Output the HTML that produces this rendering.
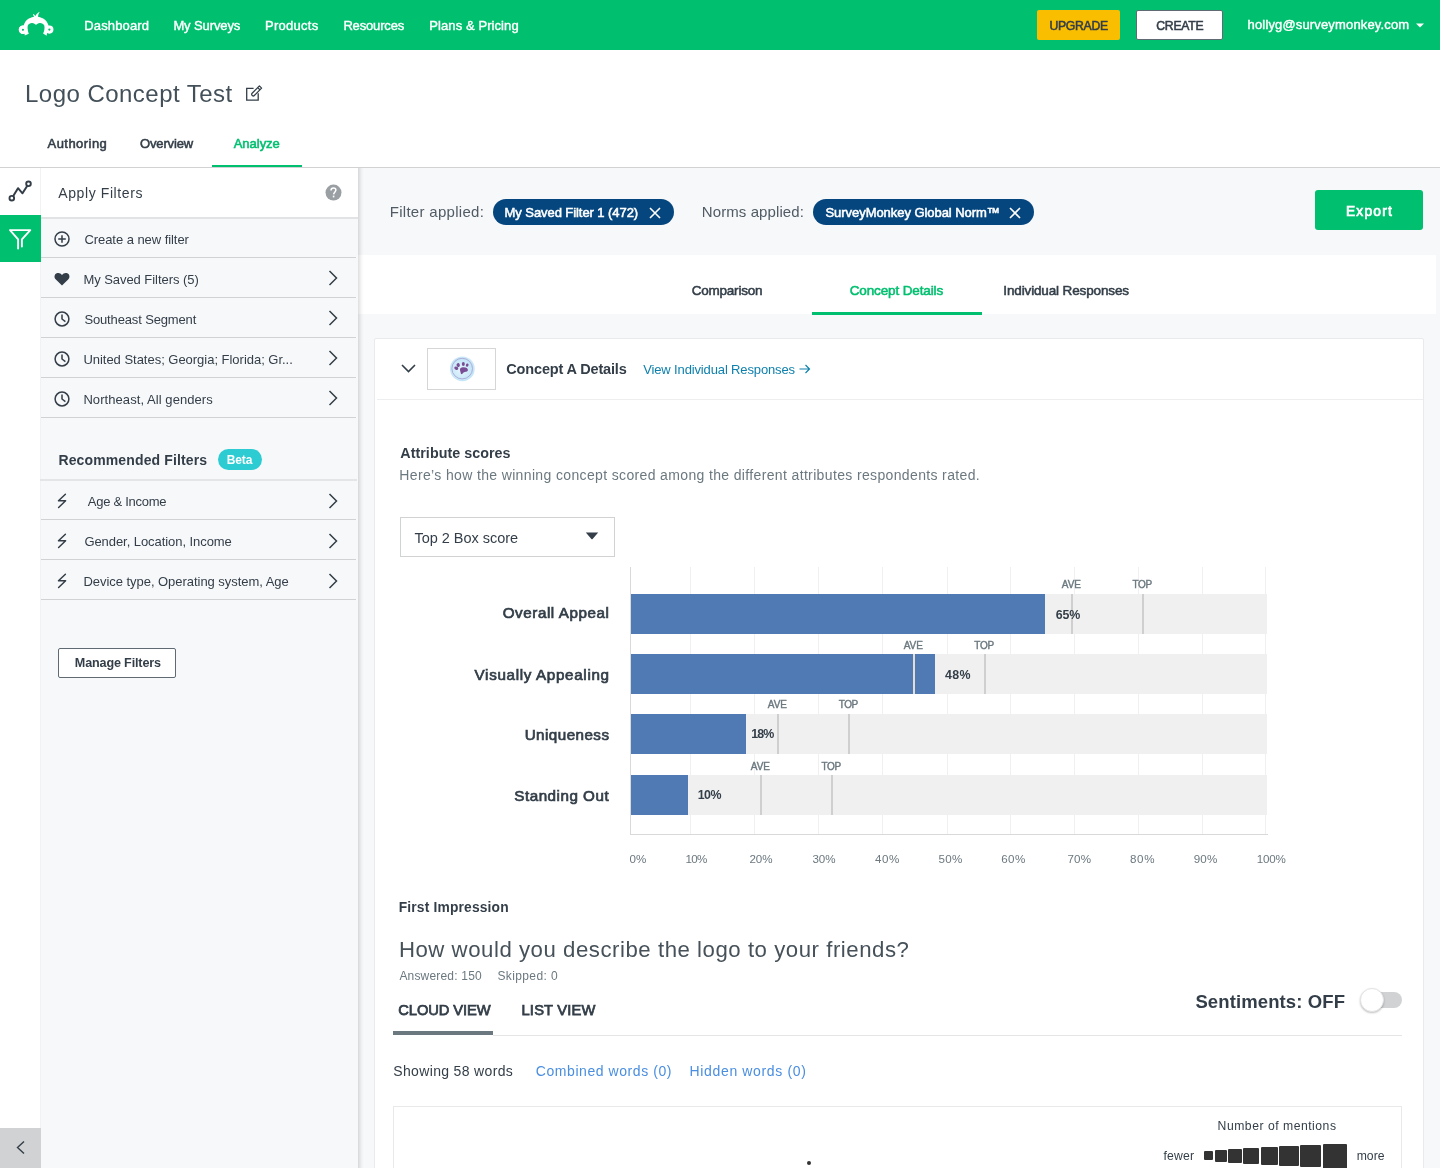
<!DOCTYPE html>
<html><head><meta charset="utf-8">
<style>
*{box-sizing:border-box;margin:0;padding:0}
html,body{width:1440px;height:1168px;overflow:hidden;background:#fff;font-family:"Liberation Sans",sans-serif;color:#333e48;position:relative}
.t{position:absolute;white-space:nowrap}
.b{position:absolute}
svg{position:absolute;overflow:visible}
</style></head><body>
<!-- header -->
<div class="b" style="left:0;top:0;width:1440px;height:50px;background:#00bf6f"></div>
<svg style="left:15px;top:8px" width="42" height="32" viewBox="0 0 42 32">
 <g fill="#fff" fill-rule="evenodd">
  <path d="M8 17.4 a4.25 4.25 0 1 0 0.01 0 Z M7.9 20.6 a1.15 1.15 0 1 1 -0.01 0 Z" transform="translate(0,0)"/>
  <path d="M9.8 27.6 L13.8 25.7 C12.6 23 12.3 19.6 12.8 17.6 C13.5 15.6 15.4 14.8 17.2 14.9 C18.8 15 20.2 15.8 21 16.9 C21.8 15.8 23.2 15 24.8 14.9 C26.6 14.8 28.6 15.7 29.3 17.6 C29.8 19.6 29.5 23 28.1 25.5 L31.6 27.7 L33.6 17.6 C31.8 11.2 26.5 8.7 21 8.7 C15.5 8.7 10.3 11.2 8.6 17.6 Z"/>
  <path d="M19.2 9 L17.9 6.6 L18.6 6.1 L20.5 7.9 C21.4 6.1 22.9 4.6 24.7 4 C23.6 5.5 23.1 7.1 23 9 Z"/>
 </g>
 <circle cx="8" cy="21.7" r="2.7" fill="none" stroke="#fff" stroke-width="2.9"/>
 <circle cx="34.4" cy="21.6" r="2.6" fill="none" stroke="#fff" stroke-width="2.9"/>
</svg>
<div class="b" style="left:1037px;top:10px;width:83px;height:30px;background:#f9be00;border-radius:2px"></div>
<div class="b" style="left:1136px;top:10px;width:87px;height:30px;background:#fff;border:1px solid #5f6a73;border-radius:2px"></div>
<svg style="left:1416px;top:23px" width="8" height="5" viewBox="0 0 8 5"><path d="M0 0.5 H8 L4 4.5 Z" fill="#fff"/></svg>

<!-- title edit icon -->
<svg style="left:240px;top:80px" width="28" height="26" viewBox="240 80 28 26">
 <path d="M253.6 88.3 H246.7 V100.2 H258.2 V93.3" fill="none" stroke="#333e48" stroke-width="1.3"/>
 <path d="M254.3 95.5 L261.6 88.1 L259.4 85.9 L252.1 93.2 C251.5 94.1 251.7 95.1 252.3 95.6 C252.9 96.1 253.7 96.1 254.3 95.5 Z M257.7 87.6 L259.9 89.8" fill="none" stroke="#333e48" stroke-width="1.25" stroke-linejoin="round"/>
</svg>
<div class="b" style="left:212px;top:165px;width:90px;height:3px;background:#00bf6f"></div>
<div class="b" style="left:0;top:167px;width:1440px;height:1px;background:#d0d2d3"></div>

<!-- left rail -->
<div class="b" style="left:0;top:168px;width:41px;height:1000px;background:#fff"></div>
<div class="b" style="left:40px;top:168px;width:1px;height:1000px;background:#f1f2f3"></div>
<svg style="left:0;top:168px" width="40" height="48" viewBox="0 168 40 48">
 <circle cx="11.8" cy="198.2" r="2.3" fill="none" stroke="#333e48" stroke-width="1.9"/>
 <circle cx="28.5" cy="183.8" r="2.3" fill="none" stroke="#333e48" stroke-width="1.9"/>
 <path d="M13.1 196.2 L18 188.2 L22.5 193.3 L27.3 185.7" fill="none" stroke="#333e48" stroke-width="2" stroke-linejoin="round"/>
</svg>
<div class="b" style="left:0;top:215px;width:41px;height:47px;background:#00bf6f"></div>
<svg style="left:0;top:216px" width="40" height="46" viewBox="0 216 40 46">
 <path d="M10 230.1 H30.3 L21.9 239.3 V246.6 M10 230.1 L18.1 239.3 V248.6" fill="none" stroke="#fff" stroke-width="1.9" stroke-linejoin="round" stroke-linecap="round"/>
</svg>
<div class="b" style="left:0;top:1128px;width:41px;height:40px;background:#d0d2d3"></div>
<svg style="left:0;top:1128px" width="40" height="40" viewBox="0 1128 40 40"><path d="M24 1141.5 L17.5 1147.5 L24 1153.5" fill="none" stroke="#333e48" stroke-width="1.4"/></svg>

<!-- filter panel -->
<div class="b" style="left:41px;top:168px;width:317px;height:1000px;background:#f7f8fa"></div>
<div class="b" style="left:41px;top:168px;width:317px;height:51px;background:#fff;border-bottom:2px solid #e1e3e5"></div>
<svg style="left:325px;top:184px" width="17" height="17" viewBox="0 0 17 17">
 <circle cx="8.5" cy="8.6" r="8" fill="#9a9fa4"/>
 <path d="M6 6.4 C6 4.8 7.1 3.9 8.5 3.9 C9.9 3.9 10.9 4.8 10.9 6.1 C10.9 7.7 8.9 8.1 8.6 10.3" fill="none" stroke="#fff" stroke-width="1.5"/>
 <rect x="7.8" y="11.6" width="1.6" height="1.8" fill="#fff"/>
</svg>
<div class="b" style="left:41px;top:257px;width:315px;height:1px;background:#d0d2d3"></div>
<div class="b" style="left:41px;top:297px;width:315px;height:1px;background:#d0d2d3"></div>
<div class="b" style="left:41px;top:337px;width:315px;height:1px;background:#d0d2d3"></div>
<div class="b" style="left:41px;top:377px;width:315px;height:1px;background:#d0d2d3"></div>
<div class="b" style="left:41px;top:417px;width:315px;height:1px;background:#d0d2d3"></div>
<div class="b" style="left:41px;top:519px;width:315px;height:1px;background:#d0d2d3"></div>
<div class="b" style="left:41px;top:559px;width:315px;height:1px;background:#d0d2d3"></div>
<div class="b" style="left:41px;top:599px;width:315px;height:1px;background:#d0d2d3"></div>
<svg style="left:326px;top:269px" width="14" height="18" viewBox="0 0 14 18"><path d="M3.5 2 L10.5 9 L3.5 16" fill="none" stroke="#333e48" stroke-width="1.5"/></svg>
<svg style="left:326px;top:309px" width="14" height="18" viewBox="0 0 14 18"><path d="M3.5 2 L10.5 9 L3.5 16" fill="none" stroke="#333e48" stroke-width="1.5"/></svg>
<svg style="left:326px;top:349px" width="14" height="18" viewBox="0 0 14 18"><path d="M3.5 2 L10.5 9 L3.5 16" fill="none" stroke="#333e48" stroke-width="1.5"/></svg>
<svg style="left:326px;top:389px" width="14" height="18" viewBox="0 0 14 18"><path d="M3.5 2 L10.5 9 L3.5 16" fill="none" stroke="#333e48" stroke-width="1.5"/></svg>
<svg style="left:326px;top:492px" width="14" height="18" viewBox="0 0 14 18"><path d="M3.5 2 L10.5 9 L3.5 16" fill="none" stroke="#333e48" stroke-width="1.5"/></svg>
<svg style="left:326px;top:532px" width="14" height="18" viewBox="0 0 14 18"><path d="M3.5 2 L10.5 9 L3.5 16" fill="none" stroke="#333e48" stroke-width="1.5"/></svg>
<svg style="left:326px;top:572px" width="14" height="18" viewBox="0 0 14 18"><path d="M3.5 2 L10.5 9 L3.5 16" fill="none" stroke="#333e48" stroke-width="1.5"/></svg>
<svg style="left:53px;top:230px" width="18" height="18" viewBox="0 0 18 18"><circle cx="9" cy="9" r="7" fill="none" stroke="#333e48" stroke-width="1.5"/><path d="M9 5.2 V12.8 M5.2 9 H12.8" stroke="#333e48" stroke-width="1.5"/></svg>
<svg style="left:53px;top:271px" width="18" height="16" viewBox="0 0 18 16"><path d="M9 14.5 L2.6 8.3 C0.9 6.6 1.2 3.3 3.7 2.3 C5.8 1.5 7.8 2.4 9 4 C10.2 2.4 12.2 1.5 14.3 2.3 C16.8 3.3 17.1 6.6 15.4 8.3 Z" fill="#333e48"/></svg>
<svg style="left:53px;top:310px" width="18" height="18" viewBox="0 0 18 18"><circle cx="9" cy="9" r="6.9" fill="none" stroke="#333e48" stroke-width="1.5"/><path d="M9 4.6 V9 L12.4 11.6" fill="none" stroke="#333e48" stroke-width="1.5"/></svg>
<svg style="left:53px;top:350px" width="18" height="18" viewBox="0 0 18 18"><circle cx="9" cy="9" r="6.9" fill="none" stroke="#333e48" stroke-width="1.5"/><path d="M9 4.6 V9 L12.4 11.6" fill="none" stroke="#333e48" stroke-width="1.5"/></svg>
<svg style="left:53px;top:390px" width="18" height="18" viewBox="0 0 18 18"><circle cx="9" cy="9" r="6.9" fill="none" stroke="#333e48" stroke-width="1.5"/><path d="M9 4.6 V9 L12.4 11.6" fill="none" stroke="#333e48" stroke-width="1.5"/></svg>
<svg style="left:55px;top:492px" width="14" height="18" viewBox="0 0 14 18"><path d="M10.4 2.3 L3.5 8.8 H10.6 L3.6 15.5" fill="none" stroke="#333e48" stroke-width="1.5" stroke-linejoin="round" stroke-linecap="round"/></svg>
<svg style="left:55px;top:532px" width="14" height="18" viewBox="0 0 14 18"><path d="M10.4 2.3 L3.5 8.8 H10.6 L3.6 15.5" fill="none" stroke="#333e48" stroke-width="1.5" stroke-linejoin="round" stroke-linecap="round"/></svg>
<svg style="left:55px;top:572px" width="14" height="18" viewBox="0 0 14 18"><path d="M10.4 2.3 L3.5 8.8 H10.6 L3.6 15.5" fill="none" stroke="#333e48" stroke-width="1.5" stroke-linejoin="round" stroke-linecap="round"/></svg>
<div class="b" style="left:40px;top:479px;width:317px;height:2px;background:#e3e5e7"></div>
<div class="b" style="left:218px;top:449px;width:44px;height:21px;background:#2dccd3;border-radius:11px"></div>
<div class="b" style="left:58px;top:648px;width:118px;height:30px;background:#fff;border:1px solid #5f6a73;border-radius:2px"></div>

<!-- main -->
<div class="b" style="left:358px;top:168px;width:1082px;height:1000px;background:#f7f8fa"></div>
<div class="b" style="left:493px;top:199px;width:181px;height:26px;background:#05467e;border-radius:13px"></div>
<svg style="left:649px;top:207px" width="12" height="12" viewBox="0 0 12 12"><path d="M1 1 L11 11 M11 1 L1 11" stroke="#fff" stroke-width="1.6"/></svg>
<div class="b" style="left:813px;top:199px;width:221px;height:26px;background:#05467e;border-radius:13px"></div>
<svg style="left:1009px;top:207px" width="12" height="12" viewBox="0 0 12 12"><path d="M1 1 L11 11 M11 1 L1 11" stroke="#fff" stroke-width="1.6"/></svg>
<div class="b" style="left:1315px;top:190px;width:108px;height:40px;background:#00bf6f;border-radius:3px"></div>

<div class="b" style="left:358px;top:255px;width:1078px;height:59px;background:#fff"></div>
<div class="b" style="left:812px;top:312px;width:170px;height:3px;background:#00bf6f"></div>

<!-- card -->
<div class="b" style="left:374px;top:338px;width:1050px;height:900px;background:#fff;border:1px solid #e8eaeb;border-radius:2px"></div>
<div class="b" style="left:377px;top:399px;width:1046px;height:1px;background:#eceeef"></div>
<svg style="left:401px;top:364px" width="15" height="9" viewBox="0 0 15 9"><path d="M1 1 L7.5 7.5 L14 1" fill="none" stroke="#333e48" stroke-width="1.6"/></svg>
<div class="b" style="left:427px;top:348px;width:69px;height:42px;background:#fff;border:1px solid #d6d6d6"></div>
<svg style="left:448px;top:355px" width="28" height="28" viewBox="0 0 28 28">
 <defs><radialGradient id="pg" cx="0.45" cy="0.55" r="0.55"><stop offset="0" stop-color="#e6f6fd"/><stop offset="0.8" stop-color="#c4e6f8"/><stop offset="1" stop-color="#aed9f4" stop-opacity="0.6"/></radialGradient></defs>
 <circle cx="14.4" cy="13.8" r="12.4" fill="url(#pg)"/>
 <circle cx="14.2" cy="13.6" r="10.3" fill="none" stroke="#9b86bf" stroke-width="0.6"/>
 <g fill="#7a4e94">
  <ellipse cx="8.3" cy="13.2" rx="2.1" ry="1.6" transform="rotate(25 8.3 13.2)"/>
  <ellipse cx="10.2" cy="10.1" rx="1.6" ry="2" transform="rotate(-20 10.2 10.1)"/>
  <ellipse cx="15.3" cy="8.9" rx="1.5" ry="2" />
  <ellipse cx="19.2" cy="10.1" rx="1.3" ry="1.7" transform="rotate(20 19.2 10.1)"/>
  <path d="M12.2 13.5 C13.5 11.9 17 11.8 18.8 13 C20.3 14 20.3 16 19 16.4 C17.6 16.8 15.8 16.6 14.6 18.5 C13.6 20 12.8 18.8 12.6 17.5 C12.4 16.3 11.6 14.4 12.2 13.5 Z"/>
 </g>
</svg>
<svg style="left:799px;top:364px" width="12" height="10" viewBox="0 0 12 10"><path d="M0.5 5 H10.5 M6.5 1 L10.5 5 L6.5 9" fill="none" stroke="#0e80ad" stroke-width="1.2"/></svg>

<!-- dropdown -->
<div class="b" style="left:400px;top:517px;width:215px;height:40px;background:#fff;border:1px solid #d0d2d3"></div>
<svg style="left:585px;top:532px" width="14" height="8" viewBox="0 0 14 8"><path d="M0.8 0.5 H13.2 L7.6 7 C7.3 7.4 6.7 7.4 6.4 7 Z" fill="#333e48"/></svg>

<div class="b" style="left:690.3px;top:567px;width:1px;height:267px;background:#f0f0f0"></div>
<div class="b" style="left:754.3px;top:567px;width:1px;height:267px;background:#f0f0f0"></div>
<div class="b" style="left:818.3px;top:567px;width:1px;height:267px;background:#f0f0f0"></div>
<div class="b" style="left:882.3px;top:567px;width:1px;height:267px;background:#f0f0f0"></div>
<div class="b" style="left:946.5px;top:567px;width:1px;height:267px;background:#f0f0f0"></div>
<div class="b" style="left:1009.5px;top:567px;width:1px;height:267px;background:#f0f0f0"></div>
<div class="b" style="left:1073.75px;top:567px;width:1px;height:267px;background:#f0f0f0"></div>
<div class="b" style="left:1137.5px;top:567px;width:1px;height:267px;background:#f0f0f0"></div>
<div class="b" style="left:1201.5px;top:567px;width:1px;height:267px;background:#f0f0f0"></div>
<div class="b" style="left:1265px;top:567px;width:1px;height:267px;background:#f0f0f0"></div>
<div class="b" style="left:630px;top:567px;width:1px;height:268px;background:#d9d9d9"></div>
<div class="b" style="left:630px;top:834px;width:638px;height:1px;background:#d9d9d9"></div>
<div class="b" style="left:631px;top:594px;width:636px;height:40px;background:#f0f0f0"></div>
<div class="b" style="left:631px;top:594px;width:414px;height:40px;background:#4f7ab3"></div>
<div class="b" style="left:1071px;top:594px;width:2px;height:40px;background:#cfcfcf"></div>
<div class="b" style="left:1142px;top:594px;width:2px;height:40px;background:#cfcfcf"></div>
<div class="b" style="left:631px;top:654px;width:636px;height:40px;background:#f0f0f0"></div>
<div class="b" style="left:631px;top:654px;width:304px;height:40px;background:#4f7ab3"></div>
<div class="b" style="left:913px;top:654px;width:2px;height:40px;background:#e3ddd3"></div>
<div class="b" style="left:984px;top:654px;width:2px;height:40px;background:#cfcfcf"></div>
<div class="b" style="left:631px;top:714px;width:636px;height:40px;background:#f0f0f0"></div>
<div class="b" style="left:631px;top:714px;width:115px;height:40px;background:#4f7ab3"></div>
<div class="b" style="left:777px;top:714px;width:2px;height:40px;background:#cfcfcf"></div>
<div class="b" style="left:848px;top:714px;width:2px;height:40px;background:#cfcfcf"></div>
<div class="b" style="left:631px;top:775px;width:636px;height:40px;background:#f0f0f0"></div>
<div class="b" style="left:631px;top:775px;width:57px;height:40px;background:#4f7ab3"></div>
<div class="b" style="left:760px;top:775px;width:2px;height:40px;background:#cfcfcf"></div>
<div class="b" style="left:831px;top:775px;width:2px;height:40px;background:#cfcfcf"></div>

<!-- cloud section -->
<div class="b" style="left:393px;top:1031px;width:100px;height:4px;background:#6b787f"></div>
<div class="b" style="left:493px;top:1035px;width:909px;height:1px;background:#e3e5e7"></div>
<div class="b" style="left:1361px;top:992px;width:41px;height:16px;background:#d0d2d3;border-radius:8px"></div>
<div class="b" style="left:1360px;top:988px;width:24px;height:24px;background:#fff;border-radius:12px;box-shadow:0 1px 2px rgba(0,0,0,0.25);border:1px solid #e4e4e4"></div>
<div class="b" style="left:393px;top:1106px;width:1009px;height:100px;background:#fff;border:1px solid #e8e9ea"></div>
<div class="b" style="left:806.5px;top:1160.5px;width:4px;height:4px;background:#333;border-radius:2px"></div>
<div class="b" style="left:1204.2px;top:1151.4px;width:9.3px;height:9.1px;background:#333;border-radius:1px"></div>
<div class="b" style="left:1215.3px;top:1150.2px;width:11.4px;height:11.5px;background:#333;border-radius:1px"></div>
<div class="b" style="left:1228.2px;top:1149.1px;width:13.5px;height:13.7px;background:#333;border-radius:1px"></div>
<div class="b" style="left:1243.3px;top:1148.2px;width:15.4px;height:15.5px;background:#333;border-radius:1px"></div>
<div class="b" style="left:1260.5px;top:1147.3px;width:17.1px;height:17.3px;background:#333;border-radius:1px"></div>
<div class="b" style="left:1279.4px;top:1146.2px;width:19.5px;height:19.7px;background:#333;border-radius:1px"></div>
<div class="b" style="left:1300.4px;top:1145.3px;width:21.1px;height:21.5px;background:#333;border-radius:1px"></div>
<div class="b" style="left:1323.3px;top:1144.0px;width:23.5px;height:24.5px;background:#333;border-radius:1px"></div>
<div class="b" style="left:358px;top:168px;width:6px;height:1000px;background:linear-gradient(to right,rgba(0,0,0,0.13),rgba(0,0,0,0.07) 35%,rgba(0,0,0,0.025) 65%,rgba(0,0,0,0))"></div>

<div style="position:absolute;left:0;top:0;width:1440px;height:1168px;will-change:transform"><div class="t" style="left:84.30px;top:19.10px;font-size:13px;line-height:13px;font-weight:normal;color:#fff;letter-spacing:0.142px;-webkit-text-stroke:0.4px #fff;">Dashboard</div>
<div class="t" style="left:173.40px;top:19.10px;font-size:13px;line-height:13px;font-weight:normal;color:#fff;letter-spacing:-0.111px;-webkit-text-stroke:0.4px #fff;">My Surveys</div>
<div class="t" style="left:265.00px;top:19.10px;font-size:13px;line-height:13px;font-weight:normal;color:#fff;letter-spacing:0.271px;-webkit-text-stroke:0.4px #fff;">Products</div>
<div class="t" style="left:343.40px;top:19.10px;font-size:13px;line-height:13px;font-weight:normal;color:#fff;letter-spacing:-0.155px;-webkit-text-stroke:0.4px #fff;">Resources</div>
<div class="t" style="left:429.30px;top:19.10px;font-size:13px;line-height:13px;font-weight:normal;color:#fff;letter-spacing:0.084px;-webkit-text-stroke:0.4px #fff;">Plans &amp; Pricing</div>
<div class="t" style="left:1049.40px;top:20.07px;font-size:12.2px;line-height:12.2px;font-weight:normal;color:#333e48;letter-spacing:-0.257px;-webkit-text-stroke:0.55px #333e48;">UPGRADE</div>
<div class="t" style="left:1156.30px;top:20.07px;font-size:12.2px;line-height:12.2px;font-weight:normal;color:#333e48;letter-spacing:-0.240px;-webkit-text-stroke:0.55px #333e48;">CREATE</div>
<div class="t" style="left:1247.60px;top:17.75px;font-size:13px;line-height:13px;font-weight:normal;color:#fff;letter-spacing:0.152px;-webkit-text-stroke:0.4px #fff;">hollyg@surveymonkey.com</div>
<div class="t" style="left:25.00px;top:81.58px;font-size:24px;line-height:24px;font-weight:normal;color:#435059;letter-spacing:0.471px;">Logo Concept Test</div>
<div class="t" style="left:47.50px;top:137.20px;font-size:13px;line-height:13px;font-weight:normal;color:#333e48;letter-spacing:0.460px;-webkit-text-stroke:0.55px #333e48;">Authoring</div>
<div class="t" style="left:140.00px;top:137.20px;font-size:13px;line-height:13px;font-weight:normal;color:#333e48;letter-spacing:-0.141px;-webkit-text-stroke:0.55px #333e48;">Overview</div>
<div class="t" style="left:233.70px;top:137.20px;font-size:13px;line-height:13px;font-weight:normal;color:#00bf6f;letter-spacing:-0.020px;-webkit-text-stroke:0.55px #00bf6f;">Analyze</div>
<div class="t" style="left:58.30px;top:186.05px;font-size:14px;line-height:14px;font-weight:normal;color:#333e48;letter-spacing:0.590px;">Apply Filters</div>
<div class="t" style="left:84.40px;top:233.20px;font-size:13px;line-height:13px;font-weight:normal;color:#333e48;letter-spacing:-0.053px;">Create a new filter</div>
<div class="t" style="left:83.40px;top:273.00px;font-size:13px;line-height:13px;font-weight:normal;color:#333e48;letter-spacing:-0.051px;">My Saved Filters (5)</div>
<div class="t" style="left:84.40px;top:313.00px;font-size:13px;line-height:13px;font-weight:normal;color:#333e48;letter-spacing:-0.142px;">Southeast Segment</div>
<div class="t" style="left:83.40px;top:353.00px;font-size:13px;line-height:13px;font-weight:normal;color:#333e48;letter-spacing:-0.023px;">United States; Georgia; Florida; Gr...</div>
<div class="t" style="left:83.40px;top:393.00px;font-size:13px;line-height:13px;font-weight:normal;color:#333e48;letter-spacing:0.070px;">Northeast, All genders</div>
<div class="t" style="left:58.40px;top:453.25px;font-size:14px;line-height:14px;font-weight:bold;color:#333e48;letter-spacing:0.135px;">Recommended Filters</div>
<div class="t" style="left:226.70px;top:453.84px;font-size:12px;line-height:12px;font-weight:bold;color:#fff;letter-spacing:-0.112px;">Beta</div>
<div class="t" style="left:87.80px;top:495.00px;font-size:13px;line-height:13px;font-weight:normal;color:#333e48;letter-spacing:-0.275px;">Age &amp; Income</div>
<div class="t" style="left:84.40px;top:535.00px;font-size:13px;line-height:13px;font-weight:normal;color:#333e48;letter-spacing:-0.063px;">Gender, Location, Income</div>
<div class="t" style="left:83.40px;top:575.00px;font-size:13px;line-height:13px;font-weight:normal;color:#333e48;letter-spacing:-0.038px;">Device type, Operating system, Age</div>
<div class="t" style="left:74.80px;top:657.33px;font-size:12.6px;line-height:12.6px;font-weight:bold;color:#333e48;letter-spacing:-0.152px;">Manage Filters</div>
<div class="t" style="left:389.70px;top:203.90px;font-size:15px;line-height:15px;font-weight:normal;color:#505b64;letter-spacing:0.295px;">Filter applied:</div>
<div class="t" style="left:504.60px;top:206.10px;font-size:13px;line-height:13px;font-weight:normal;color:#fff;letter-spacing:-0.072px;-webkit-text-stroke:0.55px #fff;">My Saved Filter 1 (472)</div>
<div class="t" style="left:701.80px;top:203.90px;font-size:15px;line-height:15px;font-weight:normal;color:#505b64;letter-spacing:0.092px;">Norms applied:</div>
<div class="t" style="left:825.50px;top:206.10px;font-size:13px;line-height:13px;font-weight:normal;color:#fff;letter-spacing:-0.052px;-webkit-text-stroke:0.55px #fff;">SurveyMonkey Global Norm™</div>
<div class="t" style="left:1346.00px;top:205.32px;font-size:13.8px;line-height:13.8px;font-weight:normal;color:#fff;letter-spacing:1.172px;-webkit-text-stroke:0.7px #fff;">Export</div>
<div class="t" style="left:691.70px;top:283.87px;font-size:13.5px;line-height:13.5px;font-weight:normal;color:#333e48;letter-spacing:-0.219px;-webkit-text-stroke:0.55px #333e48;">Comparison</div>
<div class="t" style="left:849.70px;top:283.87px;font-size:13.5px;line-height:13.5px;font-weight:normal;color:#00bf6f;letter-spacing:-0.125px;-webkit-text-stroke:0.55px #00bf6f;">Concept Details</div>
<div class="t" style="left:1003.30px;top:283.87px;font-size:13.5px;line-height:13.5px;font-weight:normal;color:#333e48;letter-spacing:-0.136px;-webkit-text-stroke:0.55px #333e48;">Individual Responses</div>
<div class="t" style="left:506.30px;top:361.73px;font-size:14.5px;line-height:14.5px;font-weight:bold;color:#333e48;letter-spacing:-0.157px;">Concept A Details</div>
<div class="t" style="left:643.20px;top:362.75px;font-size:13px;line-height:13px;font-weight:normal;color:#0e80ad;letter-spacing:-0.135px;">View Individual Responses</div>
<div class="t" style="left:400.30px;top:445.80px;font-size:14.3px;line-height:14.3px;font-weight:bold;color:#333e48;letter-spacing:0.041px;">Attribute scores</div>
<div class="t" style="left:399.30px;top:467.95px;font-size:14px;line-height:14px;font-weight:normal;color:#6b787f;letter-spacing:0.357px;">Here’s how the winning concept scored among the different attributes respondents rated.</div>
<div class="t" style="left:414.50px;top:530.93px;font-size:14.5px;line-height:14.5px;font-weight:normal;color:#333e48;letter-spacing:-0.029px;">Top 2 Box score</div>
<div class="t" style="left:502.70px;top:605.43px;font-size:15.2px;line-height:15.2px;font-weight:normal;color:#333e48;letter-spacing:0.574px;-webkit-text-stroke:0.7px #333e48;">Overall Appeal</div>
<div class="t" style="left:474.60px;top:666.53px;font-size:15.2px;line-height:15.2px;font-weight:normal;color:#333e48;letter-spacing:0.671px;-webkit-text-stroke:0.7px #333e48;">Visually Appealing</div>
<div class="t" style="left:524.70px;top:727.13px;font-size:15.2px;line-height:15.2px;font-weight:normal;color:#333e48;letter-spacing:0.454px;-webkit-text-stroke:0.7px #333e48;">Uniqueness</div>
<div class="t" style="left:514.30px;top:787.93px;font-size:15.2px;line-height:15.2px;font-weight:normal;color:#333e48;letter-spacing:0.515px;-webkit-text-stroke:0.7px #333e48;">Standing Out</div>
<div class="t" style="left:1061.80px;top:580.29px;font-size:10px;line-height:10px;font-weight:normal;color:#6b787f;letter-spacing:-0.099px;-webkit-text-stroke:0.4px #6b787f;">AVE</div>
<div class="t" style="left:1132.40px;top:580.29px;font-size:10px;line-height:10px;font-weight:normal;color:#6b787f;letter-spacing:-0.353px;-webkit-text-stroke:0.4px #6b787f;">TOP</div>
<div class="t" style="left:903.75px;top:640.54px;font-size:10px;line-height:10px;font-weight:normal;color:#6b787f;letter-spacing:-0.074px;-webkit-text-stroke:0.4px #6b787f;">AVE</div>
<div class="t" style="left:974.30px;top:640.54px;font-size:10px;line-height:10px;font-weight:normal;color:#6b787f;letter-spacing:-0.303px;-webkit-text-stroke:0.4px #6b787f;">TOP</div>
<div class="t" style="left:767.80px;top:700.44px;font-size:10px;line-height:10px;font-weight:normal;color:#6b787f;letter-spacing:-0.099px;-webkit-text-stroke:0.4px #6b787f;">AVE</div>
<div class="t" style="left:838.75px;top:700.44px;font-size:10px;line-height:10px;font-weight:normal;color:#6b787f;letter-spacing:-0.478px;-webkit-text-stroke:0.4px #6b787f;">TOP</div>
<div class="t" style="left:750.80px;top:761.54px;font-size:10px;line-height:10px;font-weight:normal;color:#6b787f;letter-spacing:-0.049px;-webkit-text-stroke:0.4px #6b787f;">AVE</div>
<div class="t" style="left:821.40px;top:761.54px;font-size:10px;line-height:10px;font-weight:normal;color:#6b787f;letter-spacing:-0.353px;-webkit-text-stroke:0.4px #6b787f;">TOP</div>
<div class="t" style="left:1055.70px;top:608.60px;font-size:12.4px;line-height:12.4px;font-weight:bold;color:#333e48;letter-spacing:-0.091px;">65%</div>
<div class="t" style="left:945.10px;top:668.50px;font-size:12.4px;line-height:12.4px;font-weight:bold;color:#333e48;letter-spacing:0.359px;">48%</div>
<div class="t" style="left:751.25px;top:728.25px;font-size:12.4px;line-height:12.4px;font-weight:bold;color:#333e48;letter-spacing:-0.891px;">18%</div>
<div class="t" style="left:697.80px;top:789.40px;font-size:12.4px;line-height:12.4px;font-weight:bold;color:#333e48;letter-spacing:-0.591px;">10%</div>
<div class="t" style="left:629.40px;top:853.38px;font-size:11.6px;line-height:11.6px;font-weight:normal;color:#6b787f;letter-spacing:0.152px;">0%</div>
<div class="t" style="left:685.40px;top:853.38px;font-size:11.6px;line-height:11.6px;font-weight:normal;color:#6b787f;letter-spacing:-0.698px;">10%</div>
<div class="t" style="left:749.40px;top:853.38px;font-size:11.6px;line-height:11.6px;font-weight:normal;color:#6b787f;letter-spacing:0.002px;">20%</div>
<div class="t" style="left:812.40px;top:853.38px;font-size:11.6px;line-height:11.6px;font-weight:normal;color:#6b787f;letter-spacing:0.002px;">30%</div>
<div class="t" style="left:875.00px;top:853.38px;font-size:11.6px;line-height:11.6px;font-weight:normal;color:#6b787f;letter-spacing:0.552px;">40%</div>
<div class="t" style="left:938.50px;top:853.38px;font-size:11.6px;line-height:11.6px;font-weight:normal;color:#6b787f;letter-spacing:0.302px;">50%</div>
<div class="t" style="left:1001.25px;top:853.38px;font-size:11.6px;line-height:11.6px;font-weight:normal;color:#6b787f;letter-spacing:0.427px;">60%</div>
<div class="t" style="left:1067.50px;top:853.38px;font-size:11.6px;line-height:11.6px;font-weight:normal;color:#6b787f;letter-spacing:0.177px;">70%</div>
<div class="t" style="left:1130.00px;top:853.38px;font-size:11.6px;line-height:11.6px;font-weight:normal;color:#6b787f;letter-spacing:0.677px;">80%</div>
<div class="t" style="left:1193.75px;top:853.38px;font-size:11.6px;line-height:11.6px;font-weight:normal;color:#6b787f;letter-spacing:0.177px;">90%</div>
<div class="t" style="left:1256.75px;top:853.38px;font-size:11.6px;line-height:11.6px;font-weight:normal;color:#6b787f;letter-spacing:-0.198px;">100%</div>
<div class="t" style="left:398.70px;top:901.32px;font-size:13.8px;line-height:13.8px;font-weight:bold;color:#333e48;letter-spacing:0.173px;">First Impression</div>
<div class="t" style="left:398.90px;top:938.91px;font-size:22.2px;line-height:22.2px;font-weight:normal;color:#465159;letter-spacing:0.539px;">How would you describe the logo to your friends?</div>
<div class="t" style="left:399.40px;top:969.54px;font-size:12px;line-height:12px;font-weight:normal;color:#6b787f;letter-spacing:0.185px;">Answered: 150</div>
<div class="t" style="left:497.40px;top:969.54px;font-size:12px;line-height:12px;font-weight:normal;color:#6b787f;letter-spacing:0.385px;">Skipped: 0</div>
<div class="t" style="left:398.30px;top:1003.36px;font-size:14.7px;line-height:14.7px;font-weight:normal;color:#333e48;letter-spacing:-0.074px;-webkit-text-stroke:0.75px #333e48;">CLOUD VIEW</div>
<div class="t" style="left:521.50px;top:1003.36px;font-size:14.7px;line-height:14.7px;font-weight:normal;color:#333e48;letter-spacing:0.191px;-webkit-text-stroke:0.75px #333e48;">LIST VIEW</div>
<div class="t" style="left:1195.40px;top:993.04px;font-size:18.5px;line-height:18.5px;font-weight:bold;color:#333e48;letter-spacing:0.114px;">Sentiments: OFF</div>
<div class="t" style="left:393.30px;top:1063.95px;font-size:14px;line-height:14px;font-weight:normal;color:#333e48;letter-spacing:0.340px;">Showing 58 words</div>
<div class="t" style="left:535.80px;top:1063.95px;font-size:14px;line-height:14px;font-weight:normal;color:#4a8ee0;letter-spacing:0.566px;">Combined words (0)</div>
<div class="t" style="left:689.60px;top:1063.95px;font-size:14px;line-height:14px;font-weight:normal;color:#4a8ee0;letter-spacing:0.644px;">Hidden words (0)</div>
<div class="t" style="left:1217.60px;top:1120.47px;font-size:12.2px;line-height:12.2px;font-weight:normal;color:#333e48;letter-spacing:0.509px;">Number of mentions</div>
<div class="t" style="left:1163.50px;top:1150.17px;font-size:12.2px;line-height:12.2px;font-weight:normal;color:#333e48;letter-spacing:0.164px;">fewer</div>
<div class="t" style="left:1356.70px;top:1150.17px;font-size:12.2px;line-height:12.2px;font-weight:normal;color:#333e48;letter-spacing:0.004px;">more</div></div>
</body></html>
